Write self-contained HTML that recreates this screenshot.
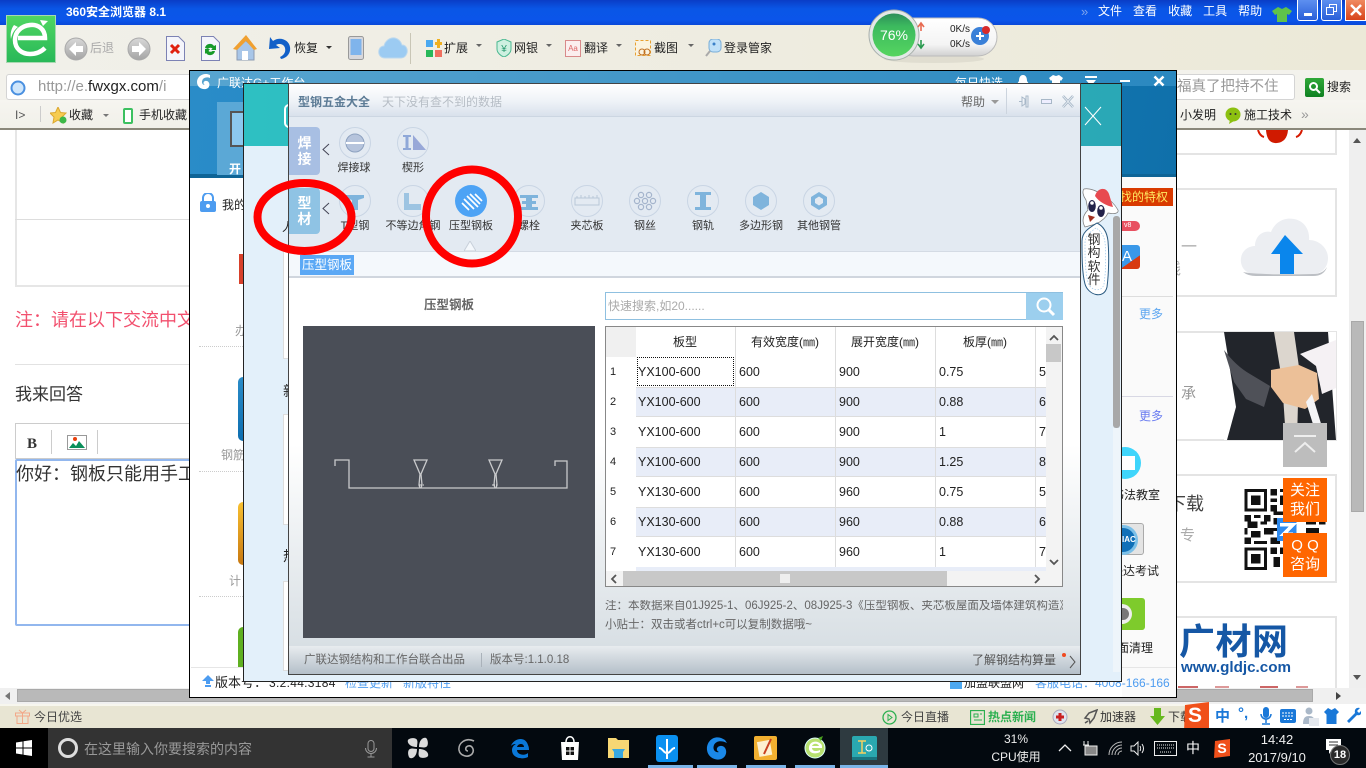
<!DOCTYPE html>
<html><head><meta charset="utf-8"><title>型钢五金大全</title>
<style>
*{box-sizing:border-box}
html,body{margin:0;padding:0;width:1366px;height:768px;overflow:hidden;background:#fff;font-family:"Liberation Sans","Noto Sans CJK SC",sans-serif;font-size:12px;color:#222}
.a,.t,svg.i{position:absolute}
.t{white-space:nowrap;line-height:1}
.c{transform:translateX(-50%)}
</style></head><body>

<!-- page background -->
<div class="a" style="left:0;top:130px;width:1366px;height:558px;background:#fff"></div>
<div class="a" style="left:15px;top:130px;width:200px;height:157px;border:2px solid #e6e6e6;border-top:0"></div>
<div class="a" style="left:15px;top:219px;width:200px;height:1px;background:#ddd"></div>
<div class="t" style="left:15px;top:311px;font-size:18px;color:#f2506e">注：请在以下交流中文</div>
<div class="a" style="left:15px;top:364px;width:200px;height:1px;background:#e2e2e2"></div>
<div class="t" style="left:15px;top:386px;font-size:17px;color:#333">我来回答</div>
<div class="a" style="left:15px;top:423px;width:200px;height:36px;border:1px solid #ccc;background:#fff"></div>
<div class="t" style="left:27px;top:436px;font:bold 15px 'Liberation Serif',serif;color:#333">B</div>
<div class="a" style="left:51px;top:430px;width:1px;height:24px;background:#ccc"></div>
<div class="a" style="left:97px;top:430px;width:1px;height:24px;background:#ccc"></div>
<svg class="i" style="left:67px;top:435px" width="20" height="15" viewBox="0 0 20 15"><rect x=".5" y=".5" width="19" height="14" fill="#fff" stroke="#999"/><circle cx="8" cy="4" r="2" fill="#e8400c"/><path d="M2 13l4-5 3 3 3-5 6 7z" fill="#0a8f5a"/></svg>
<div class="a" style="left:15px;top:459px;width:200px;height:167px;border:2px solid #92b7ee;background:#fff;border-radius:2px"></div>
<div class="t" style="left:16px;top:465px;font-size:18px;color:#333">你好：钢板只能用手工</div>

<!-- right page boxes -->
<div class="a" style="left:1177px;top:130px;width:160px;height:25px;border:2px solid #e4e4e4;border-top:0;border-left:0"></div>
<svg class="i" style="left:1250px;top:130px" width="60" height="24" viewBox="0 0 60 24"><path d="M8 0q2 6 6 7M52 0q-2 6-6 7" stroke="#d61a00" stroke-width="2" fill="none"/><path d="M16 0h22q-1 12-11 13T16 0z" fill="#d01a00"/></svg>
<div class="a" style="left:1177px;top:188px;width:160px;height:109px;border:2px solid #e4e4e4;border-left:0"></div>
<div class="t" style="left:1181px;top:240px;font-size:16px;color:#aaa">一</div>
<div class="t" style="left:1165px;top:262px;font-size:16px;color:#aaa">线</div>
<svg class="i" style="left:1240px;top:214px" width="90" height="64" viewBox="0 0 90 64"><path d="M16 60C3 60 0 50 1 44c1-8 8-12 14-12 0-10 8-16 16-14C35 8 44 3 54 5c11 2 16 12 15 21 10 0 19 8 19 18 0 10-7 16-15 16z" fill="#eceef2"/><path d="M3 58q13 3 70 2 10 0 14-7-3 9-14 9H16q-8 0-13-4z" fill="#bcbfc4"/><path d="M45 21L31 40h9v20h14V40h9z" fill="#0a86ec"/></svg>
<div class="a" style="left:1177px;top:331px;width:160px;height:110px;border:2px solid #e4e4e4;border-left:0"></div>
<div class="t" style="left:1181px;top:386px;font-size:15px;color:#999">承</div>
<svg class="i" style="left:1224px;top:332px" width="112" height="108" viewBox="0 0 112 108"><rect width="112" height="108" fill="#fff"/><path d="M0 0H104L112 108H3L12 75 8 50z" fill="#22252b"/><path d="M0 18q12 16 26 24l20 12-6 21-18-8L10 50z" fill="#4f5158"/><path d="M50 0h20l5 35-2 73H62l-4-60z" fill="#dcd6ce"/><path d="M47 38l28-5 18 8 2 26-14 10-22-6-12-16z" fill="#ecc098"/><path d="M76 22l36-14v48l-14 6-6-28z" fill="#f5f1f4"/><path d="M88 62l14 46H94l-12-38z" fill="#f4f4f6"/></svg>
<div class="a" style="left:1177px;top:474px;width:160px;height:109px;border:2px solid #e4e4e4;border-left:0"></div>
<div class="t" style="left:1168px;top:495px;font-size:18px;color:#444">下载</div>
<div class="t" style="left:1180px;top:528px;font-size:15px;color:#aaa">专</div>
<svg class="i" style="left:1244px;top:489px" width="82" height="81" viewBox="0 0 25 25" shape-rendering="crispEdges"><path fill="#111" d="M0 0h7v7H0zM1 1v5h5V1zM2 2h3v3H2zM0 18h7v7H0zM1 19v5h5v-5zM2 20h3v3H2zM18 0h7v7h-7zM19 1v5h5V1zM20 2h3v3h-3zM8 0h2v2H8zM11 0h2v1h-2zM8 3h2v1H8zM11 2h1v3h-1zM14 1h2v2h-2zM13 4h2v3h-2zM8 5h2v2H8zM9 7h3v1H9zM0 8h2v2H0zM3 8h2v1H3zM6 8h2v2H6zM1 10h3v2H1zM5 10h2v1H5zM0 12h1v2H0zM2 13h3v2H2zM6 12h3v2H6zM0 15h2v2H0zM3 16h4v1H3zM8 15h3v2H8zM9 9h2v2H9zM8 12h2v1H8zM16 7h2v2h-2zM19 8h3v3h-3zM23 9h2v2h-2zM19 12h4v2h-4zM17 14h2v3h-2zM20 15h4v2h-4zM8 18h2v2H8zM11 18h4v2h-4zM16 18h3v2h-3zM21 18h3v3h-3zM9 21h2v3H9zM12 21h3v2h-3zM16 21h3v3h-3zM20 22h2v2h-2zM13 24h2v1h-2z"/><rect x="10" y="9" width="6" height="7" fill="#2f8bef"/><path d="M11 11h4l-3 3h3" stroke="#fff" fill="none"/></svg>
<div class="a" style="left:1177px;top:616px;width:160px;height:80px;border:2px solid #e4e4e4;border-left:0;border-bottom:0"></div>
<div class="t" style="left:1179px;top:624px;font-size:36px;font-weight:bold;color:#1557a5;letter-spacing:.5px">广材网</div>
<div class="t" style="left:1181px;top:660px;font-size:15.2px;font-weight:bold;color:#1557a5">www.gldjc.com</div>
<div class="a" style="left:1178px;top:686px;width:20px;height:2px;background:#c66"></div>
<div class="a" style="left:1215px;top:686px;width:14px;height:2px;background:#d99"></div>
<div class="a" style="left:1260px;top:686px;width:18px;height:2px;background:#c66"></div>
<div class="a" style="left:1296px;top:686px;width:12px;height:2px;background:#d99"></div>

<!-- page v-scroll -->
<div class="a" style="left:1349px;top:130px;width:17px;height:558px;background:#efefef"></div>
<div class="a" style="left:1351px;top:321px;width:13px;height:191px;background:#b9b9b9;border:1px solid #a9a9a9"></div>
<svg class="i" style="left:1353px;top:138px" width="9" height="6"><path d="M0 5h8L4 0z" fill="#555"/></svg>
<svg class="i" style="left:1353px;top:675px" width="9" height="6"><path d="M0 0h8L4 5z" fill="#555"/></svg>

<!-- float buttons -->
<div class="a" style="left:1283px;top:423px;width:44px;height:44px;background:#bdbdbd"></div>
<svg class="i" style="left:1293px;top:435px" width="24" height="20"><path d="M1 1h22M2 17L12 8l10 9" stroke="#eee" stroke-width="2" fill="none"/></svg>
<div class="a" style="left:1283px;top:478px;width:44px;height:44px;background:#ff6600;color:#fff;font-size:15px;line-height:19px;text-align:center;padding-top:3px">关注<br>我们</div>
<div class="a" style="left:1283px;top:533px;width:44px;height:44px;background:#ff6600;color:#fff;font-size:15px;line-height:19px;text-align:center;padding-top:3px">Q Q<br>咨询</div>

<!-- h scroll -->
<div class="a" style="left:0;top:688px;width:1366px;height:16px;background:#f0f0f0"></div>
<div class="a" style="left:17px;top:689px;width:1296px;height:13px;background:#b9b9b9;border:1px solid #a9a9a9"></div>
<svg class="i" style="left:5px;top:692px" width="6" height="9"><path d="M5 0v8L0 4z" fill="#777"/></svg>
<svg class="i" style="left:1336px;top:692px" width="6" height="9"><path d="M0 0v8l5-4z" fill="#444"/></svg>

<!-- title bar -->
<div class="a" style="left:0;top:0;width:1366px;height:25px;background:linear-gradient(#0a3dc6,#0a56e6 35%,#0b55ea 80%,#0a48d8)"></div>
<div class="t" style="left:66px;top:6px;font-size:12px;font-weight:bold;color:#fff">360安全浏览器 8.1</div>
<div class="t" style="left:1081px;top:5px;font-size:13px;color:#7fa4ee">»</div>
<div class="t" style="left:1098px;top:5px;font-size:12px;color:#fff;word-spacing:7.7px">文件 查看 收藏 工具 帮助</div>
<svg class="i" style="left:1272px;top:6px" width="20" height="16" viewBox="0 0 20 16"><path d="M6 1l4 2 4-2 6 4-3 4-2-1v8H5V8L3 9 0 5z" fill="#5fc24a"/></svg>
<div class="a" style="left:1297px;top:0;width:21px;height:21px;background:linear-gradient(#5d8ff0,#2a5fd8);border:1px solid #fff;border-top:0;border-radius:0 0 3px 3px"><div class="a" style="left:6px;top:13px;width:8px;height:3px;background:#fff"></div></div>
<div class="a" style="left:1321px;top:0;width:21px;height:21px;background:linear-gradient(#5d8ff0,#2a5fd8);border:1px solid #fff;border-top:0;border-radius:0 0 3px 3px"><svg class="i" style="left:4px;top:4px" width="12" height="12"><path d="M3.5 3V.5h7v7H8M.5 3.5h7v7h-7z" stroke="#fff" fill="none"/></svg></div>
<div class="a" style="left:1345px;top:0;width:21px;height:21px;background:linear-gradient(#f08a60,#d8431a);border:1px solid #fff;border-top:0"><svg class="i" style="left:4px;top:4px" width="12" height="12"><path d="M1 1l10 10M11 1L1 11" stroke="#fff" stroke-width="2.5"/></svg></div>

<!-- toolbar -->
<div class="a" style="left:0;top:25px;width:1366px;height:45px;background:linear-gradient(90deg,#f1f0ea,#ece9d8)"></div>
<div class="a" style="left:0;top:70px;width:1366px;height:30px;background:#f3f2ec"></div>
<div class="a" style="left:0;top:100px;width:1366px;height:30px;background:linear-gradient(#f6f5f0,#f1f0e9);border-bottom:2px solid #8a877a"></div>

<div class="a" style="left:6px;top:15px;width:50px;height:48px;background:linear-gradient(#4fd662,#28b858);border:1px solid #a8d8b0"></div>
<svg class="i" style="left:10px;top:19px" width="42" height="40" viewBox="0 0 42 40"><path d="M8 19h27c0-9-7-14-15-13C11 7 5 13 5 21c0 9 7 14 15 14 6 0 11-2 15-6" fill="none" stroke="#fff" stroke-width="4.500"/><path d="M30 1l8 1-5 5z" fill="#fff"/><path d="M4 6C1 10 0 15 1 20c1-5 3-9 7-12z" fill="#fff"/></svg>

<svg class="i" style="left:64px;top:37px" width="24" height="24"><defs><linearGradient id="g1" x1="0" y1="0" x2="0" y2="1"><stop offset="0" stop-color="#d8d8d8"/><stop offset="1" stop-color="#a4a4a4"/></linearGradient></defs><circle cx="12" cy="12" r="11" fill="url(#g1)" stroke="#aaa"/><path d="M12 5L5 12l7 7v-4h7V9h-7z" fill="#fff"/></svg>
<div class="t" style="left:90px;top:42px;font-size:12px;color:#aaa">后退</div>
<svg class="i" style="left:127px;top:37px" width="24" height="24"><circle cx="12" cy="12" r="11" fill="url(#g1)" stroke="#aaa"/><path d="M12 5l7 7-7 7v-4H5V9h7z" fill="#fff"/></svg>
<svg class="i" style="left:166px;top:36px" width="19" height="25"><path d="M.5.5h12l6 6v18H.5z" fill="#f4f5fb" stroke="#7c82b4"/><path d="M5 9l8 8M13 9l-8 8" stroke="#e02010" stroke-width="3"/></svg>
<svg class="i" style="left:201px;top:36px" width="19" height="25"><path d="M.5.5h12l6 6v18H.5z" fill="#f4f5fb" stroke="#7c82b4"/><path d="M4 12a5 5 0 0 1 9-2l2-1v5h-5l1.500-1.500A3 3 0 0 0 7 13zM14 15a5 5 0 0 1-9 2l-1 1v-5h5l-1.500 2a3 3 0 0 0 4 0z" fill="#179a2a"/></svg>
<svg class="i" style="left:233px;top:34px" width="25" height="27"><path d="M4 14v12h17V14L12 6z" fill="#a8c6e8" stroke="#8c9bb2"/><path d="M0 15L13 1l11 14-3 1-8-9-9 9z" fill="#f0a030"/><rect x="9" y="17" width="6" height="9" fill="#fff"/></svg>
<svg class="i" style="left:268px;top:36px" width="23" height="24"><path d="M2 1l-1 12 11-1-4-3c3-2 8-1 9 3 1 4-1 7-5 9l1 2c6-1 10-6 9-12C21 4 12 0 5 5z" fill="#1260c8"/></svg>
<div class="t" style="left:294px;top:42px;font-size:12px;color:#222">恢复</div>
<svg class="i" style="left:326px;top:46px" width="7" height="4"><path d="M0 0h6L3 3z" fill="#333"/></svg>
<svg class="i" style="left:348px;top:36px" width="16" height="24"><rect x=".5" y=".5" width="15" height="23" rx="2" fill="#d8d8dc" stroke="#999"/><rect x="2.500" y="3" width="11" height="16" fill="#7fb4ec"/></svg>
<svg class="i" style="left:378px;top:36px" width="30" height="23"><path d="M7 22C2 22 0 18 1 14c1-3 3-4 5-4 1-5 6-9 11-8 4 1 6 4 7 7 4 0 6 4 5 8-1 3-3 5-6 5z" fill="#9ccbf2" stroke="#bcd8ee"/></svg>
<div class="a" style="left:410px;top:33px;width:1px;height:31px;background:#c9c6b6"></div>

<svg class="i" style="left:426px;top:39px" width="16" height="19"><rect x="0" y="1" width="7" height="7" fill="#4aa8f0"/><rect x="0" y="11" width="7" height="7" fill="#28b85a"/><rect x="9" y="11" width="7" height="7" fill="#f07060"/><path d="M11 0h3v3h2v3h-2v3h-3V6H9V3h2z" fill="#f0b020"/></svg>
<div class="t" style="left:444px;top:42px;color:#222">扩展</div>
<svg class="i" style="left:476px;top:44px" width="7" height="4"><path d="M0 0h6L3 3z" fill="#666"/></svg>
<svg class="i" style="left:496px;top:39px" width="16" height="18"><path d="M8 0l7 3v7c0 4-4 7-7 8-3-1-7-4-7-8V3z" fill="#cdf0e0" stroke="#4ab890"/><text x="8" y="13" font-size="10" text-anchor="middle" fill="#2a9a70">¥</text></svg>
<div class="t" style="left:514px;top:42px;color:#222">网银</div>
<svg class="i" style="left:546px;top:44px" width="7" height="4"><path d="M0 0h6L3 3z" fill="#666"/></svg>
<div class="a" style="left:565px;top:40px;width:16px;height:17px;border:1px solid #d88a8a;background:#fbeeee;color:#d66;font-size:8px;line-height:15px;text-align:center">Aa</div>
<div class="t" style="left:584px;top:42px;color:#222">翻译</div>
<svg class="i" style="left:616px;top:44px" width="7" height="4"><path d="M0 0h6L3 3z" fill="#666"/></svg>
<svg class="i" style="left:635px;top:40px" width="17" height="17"><rect x=".5" y=".5" width="15" height="15" fill="#fbf3df" stroke="#e8a030" stroke-dasharray="3 2"/><circle cx="12" cy="12" r="3" fill="none" stroke="#c07020"/><circle cx="7" cy="12" r="3" fill="none" stroke="#c07020"/></svg>
<div class="t" style="left:654px;top:42px;color:#222">截图</div>
<svg class="i" style="left:688px;top:44px" width="7" height="4"><path d="M0 0h6L3 3z" fill="#666"/></svg>
<svg class="i" style="left:705px;top:39px" width="17" height="18"><rect x="4" y="0" width="12" height="13" rx="4" fill="#bfe0f8" stroke="#7aaed8"/><circle cx="9" cy="5" r="1.500" fill="#3a80c8"/><path d="M5 12l-4 5" stroke="#aaa" stroke-width="2"/></svg>
<div class="t" style="left:724px;top:42px;color:#222">登录管家</div>

<!-- widget -->
<svg class="i" style="left:868px;top:8px" width="132" height="56" viewBox="0 0 132 56"><defs><linearGradient id="p" x1="0" y1="0" x2="0" y2="1"><stop offset="0" stop-color="#fff"/><stop offset=".7" stop-color="#f4f4f4"/><stop offset="1" stop-color="#d0d0d0"/></linearGradient><linearGradient id="gr" x1="0" y1="0" x2="0" y2="1"><stop offset="0" stop-color="#2d8f5a"/><stop offset=".3" stop-color="#3cba5e"/><stop offset="1" stop-color="#55d560"/></linearGradient></defs><ellipse cx="66" cy="51" rx="50" ry="4" fill="#000" opacity=".06"/><rect x="26" y="10" width="103" height="38" rx="19" fill="url(#p)" stroke="#bbb"/><circle cx="26" cy="27" r="25" fill="#e4e8e6" stroke="#a8b0ac"/><circle cx="26" cy="27" r="21.500" fill="url(#gr)"/><path d="M53 23v-7M50 19l3-4 3 4" stroke="#e86a50" stroke-width="1.600" fill="none"/><path d="M53 32v7M50 36l3 4 3-4" stroke="#2a9a50" stroke-width="1.600" fill="none"/><circle cx="112" cy="28" r="9" fill="#3a80d8"/><path d="M108 28h8M112 24v8" stroke="#fff" stroke-width="2"/><circle cx="118" cy="22" r="4" fill="#d82a2a"/></svg>
<div class="t c" style="left:894px;top:28px;font-size:14px;color:#fff">76%</div>
<div class="t" style="left:950px;top:25px;font-size:10px;color:#222">0K/s</div>
<div class="t" style="left:950px;top:40px;font-size:10px;color:#222">0K/s</div>

<!-- address row -->
<div class="a" style="left:6px;top:74px;width:190px;height:26px;background:#fff;border:1px solid #d4d4d4;border-radius:3px"></div>
<svg class="i" style="left:10px;top:80px" width="16" height="16"><circle cx="8" cy="8" r="6.500" fill="#cfe6fb" stroke="#4a90e0" stroke-width="2"/></svg>
<div class="t" style="left:38px;top:79px;font-size:15px;color:#999">http://e.<span style="color:#222">fwxgx.com</span>/i</div>
<div class="a" style="left:1170px;top:74px;width:125px;height:26px;background:#fff;border:1px solid #d4d4d4;border-radius:3px"></div>
<div class="t" style="left:1177px;top:80px;font-size:14.500px;color:#999">福真了把持不住</div>
<div class="a" style="left:1305px;top:78px;width:19px;height:19px;background:linear-gradient(#2fa838,#0e8020);border-radius:2px"></div>
<svg class="i" style="left:1308px;top:81px" width="13" height="13"><circle cx="5.500" cy="5.500" r="3.500" fill="none" stroke="#fff" stroke-width="2"/><path d="M8 8l4 4" stroke="#fff" stroke-width="2"/></svg>
<div class="t" style="left:1327px;top:81px;color:#222">搜索</div>

<!-- bookmarks -->
<div class="t" style="left:15px;top:109px;font-size:12px;color:#555">I&gt;</div>
<div class="a" style="left:40px;top:106px;width:1px;height:16px;background:#ccc"></div>
<svg class="i" style="left:50px;top:107px" width="17" height="17"><path d="M8 0l2.500 5.500L16 6l-4 4 1 6-5-3-5 3 1-6-4-4 5.500-.5z" fill="#f6cc50" stroke="#dca830"/><circle cx="13" cy="13" r="3.500" fill="#3cb848"/></svg>
<div class="t" style="left:69px;top:109px;color:#222">收藏</div>
<svg class="i" style="left:103px;top:114px" width="7" height="4"><path d="M0 0h6L3 3z" fill="#777"/></svg>
<div class="a" style="left:123px;top:108px;width:10px;height:16px;border:2px solid #3cc060;border-radius:2px;background:#fff"></div>
<div class="t" style="left:139px;top:109px;color:#222">手机收藏</div>
<div class="t" style="left:1180px;top:109px;color:#222">小发明</div>
<svg class="i" style="left:1225px;top:107px" width="16" height="17"><ellipse cx="8" cy="7.500" rx="7.500" ry="7" fill="#8cc010"/><path d="M5 13l-1 4 5-3z" fill="#8cc010"/><circle cx="5.500" cy="7" r="1" fill="#333"/><circle cx="10.500" cy="7" r="1" fill="#333"/></svg>
<div class="t" style="left:1244px;top:109px;color:#222">施工技术</div>
<div class="t" style="left:1301px;top:107px;font-size:14px;color:#999">»</div>

<!-- outer window -->
<div class="a" style="left:189px;top:70px;width:988px;height:628px;background:#fff;border:1px solid #000;overflow:hidden">
<div class="a" style="left:1px;top:1px;width:985px;height:625px">
  <div class="a" style="left:-1px;top:-1px;width:987px;height:107px;background:linear-gradient(100deg,#2a8cc8 0,#1f83c2 40%,#0f70aa 100%);border-bottom:4px solid #0e6496"></div>
  <div class="a" style="left:-1px;top:-1px;width:987px;height:15px;background:linear-gradient(90deg,#58a5d0,#2a88c0)"></div>
  <svg class="i" style="left:5px;top:1px" width="17" height="17"><path d="M14 2C8-1 1 3 1 9c0 6 7 9 11 6 3-3 1-8-3-7-2 1-2 3 0 4-3 0-4-3-2-6 2-2 5-2 7-1z" fill="#fff"/></svg>
  <div class="t" style="left:26px;top:5px;font-size:12px;color:#fff">广联达G+工作台</div>
  <div class="t" style="left:764px;top:5px;font-size:12px;color:#fff">每日快选</div>
  <svg class="i" style="left:826px;top:3px" width="12" height="12"><path d="M6 0c3 0 4 3 4 6l2 3H0l2-3c0-3 1-6 4-6z" fill="#fff"/></svg>
  <svg class="i" style="left:858px;top:3px" width="14" height="12"><path d="M4 0l3 1 3-1 4 3-2 3-1-1v7H3V5L2 6 0 3z" fill="#fff"/></svg>
  <svg class="i" style="left:894px;top:4px" width="12" height="10"><path d="M0 0h12v2H0zM1 4h10L6 10z" fill="#fff"/></svg>
  <div class="a" style="left:929px;top:8px;width:10px;height:2px;background:#fff"></div>
  <svg class="i" style="left:962px;top:3px" width="12" height="12"><path d="M1.500 1.500l9 9M10.500 1.500l-9 9" stroke="#fff" stroke-width="2.500"/></svg>
  <div class="a" style="left:26px;top:30px;width:28px;height:73px;background:#5ba8d6"></div>
  <div class="a" style="left:39px;top:39px;width:16px;height:36px;background:#8cc8ee;border:2px solid #555;border-right:0"></div>
  <div class="t" style="left:38px;top:91px;font-size:12px;color:#fff;font-weight:bold">开</div>
  <div class="a" style="left:931px;top:105px;width:54px;height:520px;background:#fafafa"></div>
  <div class="a" style="left:0;top:595px;width:985px;height:1px;background:#e6e6e6"></div>
  <svg class="i" style="left:9px;top:121px" width="16" height="19"><path d="M3 9V5a5 5 0 0 1 10 0v4" fill="none" stroke="#4d9cf0" stroke-width="2"/><rect y="8" width="16" height="11" rx="2" fill="#4d9cf0"/><circle cx="8" cy="13" r="2" fill="#fff"/></svg>
  <div class="t" style="left:31px;top:127px;font-size:12px;color:#222">我的</div>
  <div class="a" style="left:8px;top:274px;width:46px;border-top:1px dotted #ccc"></div>
  <div class="a" style="left:8px;top:399px;width:46px;border-top:1px dotted #ccc"></div>
  <div class="a" style="left:8px;top:524px;width:46px;border-top:1px dotted #ccc"></div>
  <div class="a" style="left:48px;top:182px;width:6px;height:30px;background:#d8402a"></div>
  <div class="t" style="left:44px;top:253px;font-size:12px;color:#999">办</div>
  <div class="a" style="left:47px;top:305px;width:8px;height:64px;background:linear-gradient(#2a8cc8,#0d6eb0);border-radius:5px 0 0 5px"></div>
  <div class="t" style="left:30px;top:377px;font-size:12px;color:#999">钢筋</div>
  <div class="a" style="left:47px;top:430px;width:8px;height:63px;background:linear-gradient(#f8c030,#c87810);border-radius:5px 0 0 5px"></div>
  <div class="t" style="left:38px;top:503px;font-size:12px;color:#999">计</div>
  <div class="a" style="left:47px;top:555px;width:8px;height:40px;background:#5fb020;border-radius:5px 0 0 0"></div>
  <svg class="i" style="left:11px;top:603px" width="12" height="14"><path d="M6 0l6 6H8v3H4V6H0z" fill="#4d9cf0"/><rect x="3" y="10" width="6" height="2" fill="#4d9cf0"/></svg>
  <div class="t" style="left:24px;top:604px;font-size:13px;color:#222">版本号：</div>
  <div class="t" style="left:78px;top:605px;font-size:12px;letter-spacing:.3px;color:#222">3.2.44.3184</div>
  <div class="t" style="left:154px;top:605px;font-size:12px;color:#4d9cf0">检查更新</div>
  <div class="t" style="left:212px;top:605px;font-size:12px;color:#4d9cf0">新版特性</div>
  <div class="a" style="left:759px;top:605px;width:12px;height:12px;background:#4da8f0"></div>
  <div class="t" style="left:773px;top:605px;font-size:12px;color:#222">加盟联盟网</div>
  <div class="t" style="left:844px;top:605px;font-size:12px;color:#4d9cf0">客服电话：4008-166-166</div>
  <!-- right column -->
  <div class="a" style="left:931px;top:116px;width:51px;height:18px;background:#d93a00;color:#ffe860;font-size:12px;line-height:18px;white-space:nowrap;overflow:hidden"><span style="margin-left:-2px">找的特权</span></div>
  <div class="a" style="left:931px;top:149px;width:18px;height:10px;background:#e85060;border-radius:0 5px 5px 0;color:#fff;font-size:7px;line-height:10px;padding-left:2px">v8</div>
  <div class="a" style="left:931px;top:173px;width:18px;height:24px;background:linear-gradient(145deg,#3a98e8 62%,#d83a10 63%);color:#fff;font-size:15px;line-height:24px;border-radius:0 3px 3px 0">A</div>
  <div class="a" style="left:931px;top:224px;width:51px;height:1px;background:#ddd"></div>
  <div class="t" style="left:948px;top:236px;color:#5da6f0">更多</div>
  <div class="a" style="left:931px;top:324px;width:51px;height:1px;background:#d8d8e4"></div>
  <div class="t" style="left:948px;top:338px;color:#6a7cf0">更多</div>
  <div class="a" style="left:918px;top:375px;width:32px;height:32px;background:#3fd5fb;border-radius:50%"></div>
  <div class="a" style="left:931px;top:384px;width:13px;height:14px;background:#fff"></div>
  <div class="t" style="left:921px;top:417px;font-size:12px;color:#222">书法教室</div>
  <div class="a" style="left:931px;top:451px;width:22px;height:32px;background:#e4e4e4;border:1px solid #aaa;border-left:0;border-radius:0 3px 3px 0"></div>
  <div class="a" style="left:917px;top:453px;width:30px;height:30px;border-radius:50%;background:#1070b8;border:3px solid #7cc0e8;clip-path:inset(0 0 0 14px)"></div>
  <div class="t" style="left:931px;top:464px;font-size:8px;font-weight:bold;color:#fff">IAC</div>
  <div class="t" style="left:920px;top:493px;font-size:12px;color:#222">联达考试</div>
  <div class="a" style="left:931px;top:526px;width:23px;height:32px;background:#7ecb2c;border-radius:0 3px 3px 0"></div>
  <div class="a" style="left:921px;top:532px;width:20px;height:20px;background:#eee;border-radius:50%;clip-path:inset(0 0 0 10px)"></div>
  <div class="a" style="left:931px;top:536px;width:7px;height:12px;background:#777;border-radius:0 6px 6px 0"></div>
  <div class="t" style="left:914px;top:570px;font-size:12px;color:#222">桌面清理</div>
</div>
</div>

<!-- second window -->
<div class="a" style="left:243px;top:83px;width:879px;height:599px;background:#e3f0fa;border:1px solid #222;overflow:hidden">
  <div class="a" style="left:0;top:0;width:877px;height:62px;background:linear-gradient(90deg,#2ec0c2,#2aa8b6)"></div>
  <div class="a" style="left:40px;top:20px;width:8px;height:24px;border:2px solid #fff;border-right:0;border-radius:5px 0 0 5px"></div>
  <svg class="i" style="left:840px;top:22px" width="18" height="20"><path d="M1 1l16 18M17 1L1 19" stroke="#fff"/></svg>
  <div class="a" style="left:39px;top:167px;width:8px;height:108px;background:#fff;border:1px solid #ddd;border-right:0"></div>
  <div class="a" style="left:39px;top:330px;width:8px;height:111px;background:#fff;border:1px solid #ddd;border-right:0"></div>
  <div class="a" style="left:39px;top:497px;width:8px;height:90px;background:#fff;border:1px solid #ddd;border-right:0"></div>
  <div class="t" style="left:39px;top:300px;font-size:14px;color:#222;width:5px;overflow:hidden">新</div>
  <div class="t" style="left:39px;top:465px;font-size:14px;color:#222;width:5px;overflow:hidden">热</div>
  <div class="t" style="left:38px;top:137px;font-size:12px;color:#222;width:6px;overflow:hidden">人</div>
  <div class="a" style="left:869px;top:132px;width:7px;height:212px;background:#a8a8a8;border-radius:3px"></div>
  <div class="a" style="left:869px;top:344px;width:7px;height:244px;background:#eef5fa"></div>
</div>

<!-- mascot -->
<svg class="i" style="left:1081px;top:186px" width="38" height="112" viewBox="0 0 38 112"><path d="M4 41C0 34 3 28 7 24L5 14C2 10 1 5 3 3c10-2 28 10 34 21 1 4-5 4-10 3-2 5-6 8-12 11z" fill="#fff" stroke="#777" stroke-width=".7"/><path d="M14 10c2-8 11-10 14-2l4 13c-6-1-14-5-18-11z" fill="#e84a50"/><ellipse cx="11" cy="20" rx="3.800" ry="6" fill="#22224a"/><ellipse cx="20" cy="25" rx="3.800" ry="6" fill="#22224a"/><circle cx="11" cy="17" r="1.800" fill="#fff"/><circle cx="20" cy="22" r="1.800" fill="#fff"/><path d="M7 29l7 2-5 5z" fill="#a03020"/><path d="M16 37C8 42 1 46 1 55c0 15 0 32 3 43 3 11 19 16 22 3 2-15 2-34 1-46-1-9-5-15-11-18z" fill="#fff" stroke="#2a5a80"/><path d="M15 42C9 46 4 50 4 57c0 14 0 28 3 39 2 9 14 11 16 2 2-13 2-30 1-42-1-6-4-11-9-14z" fill="none" stroke="#9cc8ea" stroke-dasharray="1.500 1.500" stroke-width=".7"/></svg>
<div class="a" style="left:1086px;top:233px;width:16px;font-size:13px;line-height:13.300px;color:#333;text-align:center">钢构软件</div>

<!-- main dialog -->
<div class="a" style="left:288px;top:83px;width:793px;height:592px;border:1px solid #444;background:#fff;overflow:hidden">
  <div class="a" style="left:0;top:0;width:791px;height:33px;background:linear-gradient(#fff,#eef2f7 55%,#d9e1ec);border-bottom:1px solid #ccd6e2"></div>
  <div class="a" style="left:0;top:33px;width:791px;height:134px;background:#e3eaf2"></div>
  <div class="a" style="left:0;top:167px;width:791px;height:27px;background:#f4f8fc;border-top:1px solid #d4dbe4;border-bottom:2px solid #d0d6de"></div>
  <div class="a" style="left:0;top:196px;width:791px;height:366px;background:linear-gradient(#fff 0,#fff 45%,#d8dfe4 100%)"></div>
  <div class="a" style="left:0;top:562px;width:791px;height:28px;background:linear-gradient(#e8ecef,#b4bfc9)"></div>
  <div class="t" style="left:9px;top:12px;font-size:12px;font-weight:bold;color:#5d7c96">型钢五金大全</div>
  <div class="t" style="left:93px;top:12px;font-size:12px;color:#b6bdc5">天下没有查不到的数据</div>
  <div class="t" style="left:672px;top:12px;font-size:12px;color:#666">帮助</div>
  <svg class="i" style="left:702px;top:16px" width="8" height="5"><path d="M0 0h8L4 4z" fill="#999"/></svg>
  <div class="a" style="left:717px;top:4px;width:1px;height:26px;background:#ccd4de"></div>
  <svg class="i" style="left:729px;top:11px" width="12" height="13"><path d="M1 6.500h3M4 2v9l3-2V4zM8 1v11h2V1z" stroke="#a8b8c8" fill="none"/></svg>
  <svg class="i" style="left:752px;top:14px" width="11" height="7"><rect x=".5" y="1.500" width="10" height="4" fill="#eef" stroke="#a8b8c8"/></svg>
  <svg class="i" style="left:773px;top:11px" width="12" height="13"><path d="M1 1l10 11M11 1L1 12" stroke="#a8b8c8" stroke-width="2.500"/><path d="M1 1l10 11M11 1L1 12" stroke="#eef3f8" stroke-width=".8"/></svg>

  <!-- side tabs -->
  <div class="a" style="left:0;top:43px;width:31px;height:48px;background:#a8bfe3;border-radius:0 4px 4px 0;color:#fff;font-size:14px;font-weight:bold;line-height:16px;text-align:center;padding-top:8px">焊<br>接</div>
  <div class="a" style="left:0;top:104px;width:31px;height:46px;background:#8fc3e4;border-radius:0 4px 4px 0;color:#fff;font-size:14px;font-weight:bold;line-height:16px;text-align:center;padding-top:7px">型<br>材</div>
  <svg class="i" style="left:33px;top:59px" width="8" height="13"><path d="M7 1L1 6.500 7 12" stroke="#445" fill="none"/></svg>
  <svg class="i" style="left:33px;top:118px" width="8" height="13"><path d="M7 1L1 6.500 7 12" stroke="#445" fill="none"/></svg>
</div>

<!-- dialog icons -->
<svg class="i" style="left:288px;top:120px" width="560" height="100" viewBox="288 120 560 100">
<g fill="none" stroke="#c9d5e4"><circle cx="355" cy="143" r="15.500"/><circle cx="413" cy="143" r="15.500"/><circle cx="355" cy="201" r="15.500"/><circle cx="413" cy="201" r="15.500"/><circle cx="529" cy="201" r="15.500"/><circle cx="587" cy="201" r="15.500"/><circle cx="645" cy="201" r="15.500"/><circle cx="703" cy="201" r="15.500"/><circle cx="761" cy="201" r="15.500"/><circle cx="819" cy="201" r="15.500"/></g>
<circle cx="355" cy="143" r="9" fill="#b6c4dc" stroke="#8ea2c0"/><rect x="346" y="142" width="18" height="2" fill="#fff"/>
<path d="M403 135h8v2h-2.500v11h2.500v2h-8v-2h2.500v-11h-2.500z" fill="#8fa8d8"/><path d="M413 135l13 15h-13z" fill="#98a8d8"/>
<path d="M346 195h18v3l-6 2v10h-6v-10l-6-2z" fill="#7fb4dc"/>
<path d="M404 193h5v11h12v6h-17z" fill="#7fb4dc" opacity=".7"/>
<circle cx="471" cy="201" r="16" fill="#4da3f5"/><path d="M464 197l7-7M464 202l10-10M466 205l11-11M469 208l10-10M473 210l7-7" stroke="#fff" stroke-width="1.700" transform="rotate(90 471 201)"/>
<path d="M520 195h18v3h-6v3h4v3h-4v3h6v3h-18v-3h6v-3h-4v-3h4v-3h-6z" fill="#7fb4dc"/>
<path d="M575 205v-7h24v7zM577 198v-2M581 198v-3M585 198v-2M589 198v-3M593 198v-2M597 198v-3" fill="none" stroke="#b8c8d8"/>
<g fill="none" stroke="#a4b4cc" stroke-width="1.200"><circle cx="641" cy="195" r="2.600"/><circle cx="649" cy="195" r="2.600"/><circle cx="637" cy="201" r="2.600"/><circle cx="645" cy="201" r="2.600"/><circle cx="653" cy="201" r="2.600"/><circle cx="641" cy="207" r="2.600"/><circle cx="649" cy="207" r="2.600"/></g>
<path d="M695 192h16v3h-5v12h5v3h-16v-3h5v-12h-5z" fill="#7fb4dc"/>
<path d="M761 192l8 5v8l-8 5-8-5v-8z" fill="#7fb4dc"/>
<path d="M819 192l8 5v8l-8 5-8-5v-8z" fill="#7fb4dc"/><path d="M819 196.500l4 2.500v4l-4 2.500-4-2.500v-4z" fill="#e3eaf2"/>
</svg>
<div class="t c" style="left:354px;top:163px;font-size:11px;color:#333">焊接球</div>
<div class="t c" style="left:413px;top:163px;font-size:11px;color:#333">楔形</div>
<div class="t c" style="left:355px;top:221px;font-size:11px;color:#333">T型钢</div>
<div class="t c" style="left:413px;top:221px;font-size:11px;color:#333">不等边角钢</div>
<div class="t c" style="left:471px;top:221px;font-size:11px;color:#333">压型钢板</div>
<div class="t c" style="left:529px;top:221px;font-size:11px;color:#333">螺栓</div>
<div class="t c" style="left:587px;top:221px;font-size:11px;color:#333">夹芯板</div>
<div class="t c" style="left:645px;top:221px;font-size:11px;color:#333">钢丝</div>
<div class="t c" style="left:703px;top:221px;font-size:11px;color:#333">钢轨</div>
<div class="t c" style="left:761px;top:221px;font-size:11px;color:#333">多边形钢</div>
<div class="t c" style="left:819px;top:221px;font-size:11px;color:#333">其他钢管</div>
<svg class="i" style="left:464px;top:241px" width="12" height="10"><path d="M0 10L6 0l6 10z" fill="#f4f8fc" stroke="#c8d0da"/></svg>
<div class="a" style="left:300px;top:255px;width:54px;height:20px;background:#5ba8f5;color:#fff;font-size:12.500px;line-height:20px;text-align:center">压型钢板</div>

<!-- left drawing panel -->
<div class="t c" style="left:449px;top:299px;font-size:12.500px;font-weight:bold;color:#666">压型钢板</div>
<div class="a" style="left:303px;top:326px;width:292px;height:312px;background:#4a4e57"></div>
<svg class="i" style="left:330px;top:455px" width="240" height="36" viewBox="330 455 240 36"><path d="M335 466v-6h14v28h71l-1-3 1-11-6-14h13l-6 14 1 11-1 3h74l-1-3 1-11-6-14h13l-6 14 1 11-1 3h71v-27h-12v5" fill="none" stroke="#c9cacc" stroke-width="1.300"/><path d="M419 485h3M423 485h1M492 485h3M496 485h1" stroke="#ddd"/></svg>

<!-- search -->
<div class="a" style="left:605px;top:292px;width:458px;height:28px;border:1px solid #8fc0e0;background:#fff"></div>
<div class="t" style="left:608px;top:300px;font-size:12px;color:#aaa">快速搜索,如20......</div>
<div class="a" style="left:1026px;top:293px;width:37px;height:27px;background:#9ccfee"></div>
<svg class="i" style="left:1035px;top:296px" width="22" height="22"><circle cx="9" cy="9" r="6.500" fill="none" stroke="#fff" stroke-width="2"/><path d="M14 14l5 5" stroke="#fff" stroke-width="3"/></svg>

<!-- table -->
<div class="a" style="left:605px;top:326px;width:458px;height:261px;border:1px solid #888;background:#fff;overflow:hidden">
  <div class="a" style="left:0;top:0;width:30px;height:30px;background:#f0f0f0"></div>
  <div class="t c" style="left:79px;top:9px;font-size:12px;color:#222">板型</div>
  <div class="t c" style="left:179px;top:9px;font-size:12px;color:#222">有效宽度(㎜)</div>
  <div class="t c" style="left:279px;top:9px;font-size:12px;color:#222">展开宽度(㎜)</div>
  <div class="t c" style="left:379px;top:9px;font-size:12px;color:#222">板厚(㎜)</div>
  <div class="a" style="left:129px;top:0;width:1px;height:240px;background:#ddd"></div>
  <div class="a" style="left:229px;top:0;width:1px;height:240px;background:#ddd"></div>
  <div class="a" style="left:329px;top:0;width:1px;height:240px;background:#ddd"></div>
  <div class="a" style="left:429px;top:0;width:1px;height:240px;background:#ddd"></div>
  <div class="a" style="left:30px;top:60px;width:410px;height:30px;background:#e8edf8;border-top:1px solid #ddd;border-bottom:1px solid #ddd"></div>
  <div class="a" style="left:30px;top:120px;width:410px;height:30px;background:#e8edf8;border-top:1px solid #ddd;border-bottom:1px solid #ddd"></div>
  <div class="a" style="left:30px;top:180px;width:410px;height:30px;background:#e8edf8;border-top:1px solid #ddd;border-bottom:1px solid #ddd"></div>
  <div class="a" style="left:30px;top:240px;width:410px;height:4px;background:#e8edf8"></div>
  <div class="a" style="left:129px;top:60px;width:1px;height:180px;background:#ddd"></div>
  <div class="a" style="left:229px;top:60px;width:1px;height:180px;background:#ddd"></div>
  <div class="a" style="left:329px;top:60px;width:1px;height:180px;background:#ddd"></div>
  <div class="a" style="left:429px;top:60px;width:1px;height:180px;background:#ddd"></div>
  <div class="a" style="left:31px;top:30px;width:97px;height:29px;border:1px dotted #111"></div>

  <div class="t" style="left:4px;top:40px;font-size:11px">1</div><div class="t" style="left:32px;top:39px;font-size:12.500px">YX100-600</div><div class="t" style="left:133px;top:39px;font-size:12.500px">600</div><div class="t" style="left:233px;top:39px;font-size:12.500px">900</div><div class="t" style="left:333px;top:39px;font-size:12.500px">0.75</div><div class="t" style="left:433px;top:39px;font-size:12.500px;width:7px;overflow:hidden">5</div>
  <div class="t" style="left:4px;top:70px;font-size:11px">2</div><div class="t" style="left:32px;top:69px;font-size:12.500px">YX100-600</div><div class="t" style="left:133px;top:69px;font-size:12.500px">600</div><div class="t" style="left:233px;top:69px;font-size:12.500px">900</div><div class="t" style="left:333px;top:69px;font-size:12.500px">0.88</div><div class="t" style="left:433px;top:69px;font-size:12.500px;width:7px;overflow:hidden">6</div>
  <div class="t" style="left:4px;top:100px;font-size:11px">3</div><div class="t" style="left:32px;top:99px;font-size:12.500px">YX100-600</div><div class="t" style="left:133px;top:99px;font-size:12.500px">600</div><div class="t" style="left:233px;top:99px;font-size:12.500px">900</div><div class="t" style="left:333px;top:99px;font-size:12.500px">1</div><div class="t" style="left:433px;top:99px;font-size:12.500px;width:7px;overflow:hidden">7</div>
  <div class="t" style="left:4px;top:130px;font-size:11px">4</div><div class="t" style="left:32px;top:129px;font-size:12.500px">YX100-600</div><div class="t" style="left:133px;top:129px;font-size:12.500px">600</div><div class="t" style="left:233px;top:129px;font-size:12.500px">900</div><div class="t" style="left:333px;top:129px;font-size:12.500px">1.25</div><div class="t" style="left:433px;top:129px;font-size:12.500px;width:7px;overflow:hidden">8</div>
  <div class="t" style="left:4px;top:160px;font-size:11px">5</div><div class="t" style="left:32px;top:159px;font-size:12.500px">YX130-600</div><div class="t" style="left:133px;top:159px;font-size:12.500px">600</div><div class="t" style="left:233px;top:159px;font-size:12.500px">960</div><div class="t" style="left:333px;top:159px;font-size:12.500px">0.75</div><div class="t" style="left:433px;top:159px;font-size:12.500px;width:7px;overflow:hidden">5</div>
  <div class="t" style="left:4px;top:190px;font-size:11px">6</div><div class="t" style="left:32px;top:189px;font-size:12.500px">YX130-600</div><div class="t" style="left:133px;top:189px;font-size:12.500px">600</div><div class="t" style="left:233px;top:189px;font-size:12.500px">960</div><div class="t" style="left:333px;top:189px;font-size:12.500px">0.88</div><div class="t" style="left:433px;top:189px;font-size:12.500px;width:7px;overflow:hidden">6</div>
  <div class="t" style="left:4px;top:220px;font-size:11px">7</div><div class="t" style="left:32px;top:219px;font-size:12.500px">YX130-600</div><div class="t" style="left:133px;top:219px;font-size:12.500px">600</div><div class="t" style="left:233px;top:219px;font-size:12.500px">960</div><div class="t" style="left:333px;top:219px;font-size:12.500px">1</div><div class="t" style="left:433px;top:219px;font-size:12.500px;width:7px;overflow:hidden">7</div>

  <div class="a" style="left:440px;top:0;width:16px;height:244px;background:#f3f3f3"></div>
  <div class="a" style="left:440px;top:17px;width:15px;height:18px;background:#c8c8c8"></div>
  <svg class="i" style="left:443px;top:7px" width="10" height="7"><path d="M1 6l4-4 4 4" stroke="#555" stroke-width="1.800" fill="none"/></svg>
  <svg class="i" style="left:443px;top:232px" width="10" height="7"><path d="M1 1l4 4 4-4" stroke="#555" stroke-width="1.800" fill="none"/></svg>
  <div class="a" style="left:0;top:244px;width:456px;height:16px;background:#f3f3f3"></div>
  <div class="a" style="left:17px;top:244px;width:324px;height:16px;background:#c8c8c8"></div>
  <div class="a" style="left:174px;top:247px;width:10px;height:9px;background:#eee"></div>
  <svg class="i" style="left:4px;top:247px" width="7" height="10"><path d="M6 1L2 5l4 4" stroke="#555" stroke-width="1.800" fill="none"/></svg>
  <svg class="i" style="left:428px;top:247px" width="7" height="10"><path d="M1 1l4 4-4 4" stroke="#555" stroke-width="1.800" fill="none"/></svg>
</div>

<div class="a" style="left:605px;top:600px;width:458px;height:14px;overflow:hidden"><div class="t" style="left:0;top:1px;font-size:11.500px;color:#666">注：本数据来自01J925-1、06J925-2、08J925-3《压型钢板、夹芯板屋面及墙体建筑构造》</div></div>
<div class="t" style="left:605px;top:620px;font-size:11.500px;color:#666">小贴士：双击或者ctrl+c可以复制数据哦~</div>
<div class="t" style="left:304px;top:655px;font-size:11.500px;color:#666">广联达钢结构和工作台联合出品</div>
<div class="a" style="left:481px;top:653px;width:1px;height:14px;background:#aab2ba"></div>
<div class="t" style="left:490px;top:655px;font-size:11.500px;color:#666">版本号:1.1.0.18</div>
<div class="t" style="left:972px;top:654px;font-size:12px;color:#555">了解钢结构算量</div>
<div class="a" style="left:1062px;top:653px;width:4px;height:4px;background:#f04a20;border-radius:50%"></div>
<svg class="i" style="left:1069px;top:655px" width="8" height="14"><path d="M1 1l5 6-5 6" stroke="#555" fill="none"/></svg>

<!-- red hand-drawn ellipses -->
<svg class="i" style="left:0;top:0;pointer-events:none" width="1366" height="768"><ellipse cx="304.500" cy="217" rx="47" ry="34" fill="none" stroke="#f00" stroke-width="8"/><ellipse cx="472" cy="216.500" rx="46" ry="47" fill="none" stroke="#f00" stroke-width="8"/></svg>

<!-- status bar -->
<div class="a" style="left:0;top:704px;width:1366px;height:24px;background:#e8e5d3;border-top:2px solid #f7f6ee"></div>
<svg class="i" style="left:15px;top:709px" width="15" height="15"><path d="M.5 4h14v3H.5zM2 7h11v7.500H2zM7.500 4v10M7.500 4L4 1M7.500 4L11 1" fill="none" stroke="#f2a888"/></svg>
<div class="t" style="left:34px;top:711px;color:#444">今日优选</div>
<svg class="i" style="left:882px;top:710px" width="15" height="15"><circle cx="7.500" cy="7.500" r="6.500" fill="none" stroke="#2cb050" stroke-width="1.300"/><path d="M6 4.500l4 3-4 3z" fill="none" stroke="#2cb050"/></svg>
<div class="t" style="left:901px;top:711px;color:#444">今日直播</div>
<svg class="i" style="left:970px;top:710px" width="15" height="15"><rect x=".5" y=".5" width="14" height="14" fill="none" stroke="#2cb050" stroke-width="1.300"/><path d="M4 4h4v3H4zM4 10h8M10 4h2" stroke="#2cb050" fill="none"/></svg>
<div class="t" style="left:988px;top:711px;font-weight:bold;color:#2cb050">热点新闻</div>
<svg class="i" style="left:1052px;top:709px" width="16" height="16"><circle cx="8" cy="8" r="7" fill="#dfe4ee" stroke="#aab"/><path d="M6.500 4h3v2.500H12v3H9.500V12h-3V9.500H4v-3h2.500z" fill="#c82020"/></svg>
<svg class="i" style="left:1083px;top:709px" width="15" height="16"><path d="M14 1L6 4 2 9l4 1 1 4 4-5zM2 14l3-2" fill="none" stroke="#555" stroke-width="1.500"/></svg>
<div class="t" style="left:1100px;top:711px;color:#333">加速器</div>
<svg class="i" style="left:1150px;top:708px" width="15" height="18"><path d="M4 0h7v8h4l-7.500 9L0 8h4z" fill="#66b81e"/></svg>
<div class="t" style="left:1168px;top:711px;color:#333">下载</div>

<!-- IME -->
<div class="a" style="left:1201px;top:704px;width:165px;height:24px;background:#fff"></div>
<svg class="i" style="left:1183px;top:702px" width="27" height="30"><path d="M2 3l24-3v26L1 30z" fill="#f0501a"/></svg>
<div class="t" style="left:1188px;top:705px;font-size:21px;font-weight:bold;color:#fff">S</div>
<div class="t" style="left:1215px;top:709px;font-size:15px;font-weight:bold;color:#1a78d8">中</div>
<div class="t" style="left:1238px;top:706px;font-size:15px;font-weight:bold;color:#1a78d8">°,</div>
<svg class="i" style="left:1260px;top:707px" width="12" height="19"><rect x="3" y="0" width="6" height="11" rx="3" fill="#1a78d8"/><path d="M1 7a5 5 0 0 0 10 0M6 12v4M2 17h8" stroke="#1a78d8" stroke-width="1.500" fill="none"/></svg>
<svg class="i" style="left:1280px;top:709px" width="16" height="14"><rect width="16" height="14" rx="2" fill="#1a78d8"/><path d="M2 4h12M2 7h12M4 10.500h8" stroke="#fff" stroke-dasharray="2 1"/></svg>
<svg class="i" style="left:1303px;top:707px" width="16" height="19"><circle cx="6" cy="4" r="3.500" fill="#aab8c8"/><path d="M0 17c0-6 2-8 6-8s6 2 6 8z" fill="#aab8c8"/><rect x="6" y="11" width="10" height="8" fill="#e4e8ee"/></svg>
<svg class="i" style="left:1324px;top:708px" width="15" height="16"><path d="M4 0l3.500 2L11 0l4 4-2.500 2.500V16h-10V6.500L0 4z" fill="#1a78d8"/></svg>
<svg class="i" style="left:1346px;top:707px" width="15" height="17"><path d="M14 1c-3-1-6 1-5 5L1 14l2 2 8-8c3 1 5-1 4-4l-2 2-2-2z" fill="#1a78d8"/></svg>

<!-- taskbar -->
<div class="a" style="left:0;top:728px;width:1366px;height:40px;background:#03090f"></div>
<div class="a" style="left:0;top:728px;width:48px;height:40px;background:#000"></div>
<svg class="i" style="left:16px;top:740px" width="16" height="16"><path d="M0 2.500L6.500 1.500v6H0zM7.500 1.300L16 0v7.500H7.500zM0 8.500h6.500v6L0 13.500zM7.500 8.500H16V16l-8.500-1.300z" fill="#fff"/></svg>
<div class="a" style="left:48px;top:728px;width:344px;height:40px;background:#333"></div>
<div class="a" style="left:58px;top:738px;width:20px;height:20px;border:3px solid #ddd;border-radius:50%"></div>
<div class="t" style="left:84px;top:742px;font-size:14px;color:#999">在这里输入你要搜索的内容</div>
<svg class="i" style="left:365px;top:740px" width="12" height="18"><rect x="3" y=".5" width="6" height="11" rx="3" fill="none" stroke="#999"/><path d="M.5 8a5.500 5.500 0 0 0 11 0M6 13.500v3M2.500 17h7" stroke="#999" fill="none"/></svg>
<svg class="i" style="left:407px;top:737px" width="22" height="22"><path d="M10 10C2 10 0 5 1 3s8-3 9 0c1 2 0 5 0 7zM12 10c0-8 5-10 7-9s3 8 0 9c-2 1-5 0-7 0zM12 12c8 0 10 5 9 7s-8 3-9 0c-1-2 0-5 0-7zM10 12c0 8-5 10-7 9s-3-8 0-9c2-1 5 0 7 0z" fill="#dcdcdc"/></svg>
<svg class="i" style="left:457px;top:738px" width="20" height="20"><path d="M17 3C9-1 1 5 2 12c1 6 9 8 13 4 3-4 0-9-4-8-3 1-3 5 0 5" fill="none" stroke="#aaa" stroke-width="1.600"/></svg>
<svg class="i" style="left:510px;top:737px" width="20" height="22"><path d="M1 9C3 2 15-2 18 8c1 2 1 4 1 5H7c0 5 8 6 11 3v4c-6 3-16 1-16-7 0-3 2-5 4-6-3 0-4 1-5 2zm6 1h7c0-4-6-4-7 0z" fill="#0a78d8"/></svg>
<svg class="i" style="left:560px;top:736px" width="20" height="24"><path d="M1 6h18l-1 18H2z" fill="#fff"/><path d="M6 6c0-7 8-7 8 0" fill="none" stroke="#fff" stroke-width="1.500"/><path d="M6 11h3.500v3.500H6zM10.500 11H14v3.500h-3.500zM6 15.500h3.500V19H6zM10.500 15.500H14V19h-3.500z" fill="#111"/></svg>
<svg class="i" style="left:608px;top:738px" width="21" height="20"><path d="M0 0h8l2 2h11v18H0z" fill="#f7d774"/><path d="M6 14h9v6H6z" fill="#39a8e0"/><path d="M4 11h13l-2 3H6z" fill="#39a8e0"/></svg>
<div class="a" style="left:656px;top:735px;width:22px;height:27px;background:#0a90f0;border-radius:3px"></div>
<svg class="i" style="left:656px;top:737px" width="22" height="24"><path d="M11 2v20M3 11c4 0 4 5 8 5s4-5 8-5" stroke="#fff" stroke-width="2" fill="none"/></svg>
<svg class="i" style="left:705px;top:735px" width="24" height="27"><path d="M20 5C10-2 1 6 2 15c1 9 13 13 18 6 3-5 0-11-5-10-4 1-4 5-1 6-3 1-7-2-5-7 2-4 7-5 13-2z" fill="#1a88e8"/></svg>
<svg class="i" style="left:754px;top:736px" width="23" height="24"><rect width="23" height="24" rx="2" fill="#f2b030"/><rect x="4" y="5" width="13" height="15" fill="#fdf0d0" transform="rotate(-10 10 12)"/><path d="M17 3l-7 15" stroke="#c84020" stroke-width="2"/></svg>
<svg class="i" style="left:804px;top:736px" width="22" height="24"><circle cx="11" cy="12" r="10" fill="#b8e070" stroke="#dff"/><path d="M17 8c-4-4-11-3-12 3-1 6 6 8 11 5v-2c-4 2-8 1-8-2h10c0-2 0-3-1-4zM8 10c1-3 6-3 7 0z" fill="#fff"/><path d="M14 2l5-2-2 5z" fill="#4aa020"/></svg>
<div class="a" style="left:840px;top:728px;width:48px;height:40px;background:#2e3a40"></div>
<svg class="i" style="left:852px;top:736px" width="25" height="24"><rect width="25" height="24" rx="2" fill="#2aa8b0"/><path d="M6 5h8M10 5v12M6 17h8" stroke="#f4d060" stroke-width="1.500"/><circle cx="17" cy="12" r="3" fill="none" stroke="#fff"/><rect y="21" width="25" height="3" fill="#1a7480"/></svg>
<div class="a" style="left:648px;top:765px;width:45px;height:3px;background:#7ab4e8"></div>
<div class="a" style="left:697px;top:765px;width:40px;height:3px;background:#7ab4e8"></div>
<div class="a" style="left:746px;top:765px;width:40px;height:3px;background:#7ab4e8"></div>
<div class="a" style="left:795px;top:765px;width:40px;height:3px;background:#7ab4e8"></div>
<div class="a" style="left:840px;top:765px;width:48px;height:3px;background:#7ab4e8"></div>
<div class="t c" style="left:1016px;top:733px;font-size:12px;color:#eee">31%</div>
<div class="t c" style="left:1016px;top:751px;font-size:12px;color:#eee">CPU使用</div>
<svg class="i" style="left:1058px;top:743px" width="14" height="9"><path d="M1 8l6-6 6 6" stroke="#eee" stroke-width="1.300" fill="none"/></svg>
<svg class="i" style="left:1082px;top:741px" width="17" height="15"><rect x="3" y="5" width="12" height="9" fill="#888" stroke="#eee"/><path d="M2 0v4M6 0v4M1 4h6" stroke="#eee"/></svg>
<svg class="i" style="left:1108px;top:741px" width="15" height="15"><path d="M1 14a13 13 0 0 1 13-13M4 14A10 10 0 0 1 14 4M7 14a7 7 0 0 1 7-7M10 14a4 4 0 0 1 4-4" stroke="#bbb" fill="none"/></svg>
<svg class="i" style="left:1130px;top:741px" width="15" height="15"><path d="M1 5h3l4-4v13l-4-4H1z" fill="none" stroke="#eee"/><path d="M10 5c1 2 1 3 0 5M12 3c2 3 2 6 0 9" stroke="#eee" fill="none"/></svg>
<svg class="i" style="left:1154px;top:741px" width="23" height="15"><rect x=".5" y=".5" width="22" height="14" fill="none" stroke="#eee"/><path d="M3 4h17M3 7h17M6 11h11" stroke="#eee" stroke-dasharray="1 1"/></svg>
<div class="t c" style="left:1193px;top:741px;font-size:14px;color:#fff">中</div>
<svg class="i" style="left:1214px;top:739px" width="17" height="19"><path d="M1 2l15-2v17L0 19z" fill="#f0501a"/></svg>
<div class="t c" style="left:1222px;top:741px;font-size:14px;font-weight:bold;color:#fff">S</div>
<div class="t c" style="left:1277px;top:733px;font-size:13px;color:#eee">14:42</div>
<div class="t c" style="left:1277px;top:751px;font-size:13px;color:#eee">2017/9/10</div>
<svg class="i" style="left:1326px;top:739px" width="15" height="15"><path d="M0 0h15v11H6l-3 4v-4H0z" fill="#fff"/><path d="M3 3h9M3 6h9" stroke="#333"/></svg>
<div class="a" style="left:1330px;top:745px;width:20px;height:20px;background:#2a2a2a;border:1px solid #777;border-radius:50%;color:#fff;font-size:11px;line-height:18px;text-align:center;font-weight:bold">18</div>
</body></html>
